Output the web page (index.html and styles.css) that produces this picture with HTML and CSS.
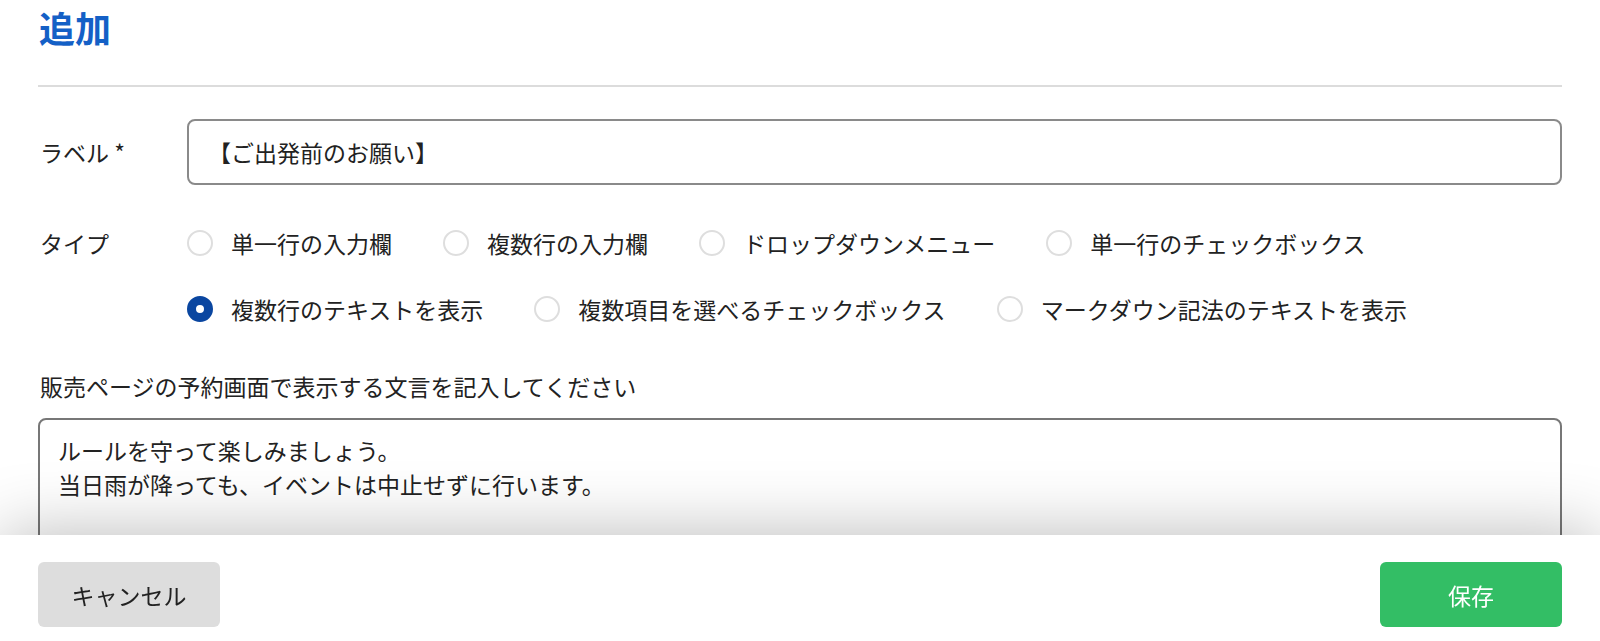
FILE: index.html
```html
<!DOCTYPE html>
<html lang="ja">
<head>
<meta charset="utf-8">
<title>追加</title>
<link rel="stylesheet" href="styles.css">
</head>
<body>
<div class="page">
  <header class="header">
    <h1 class="title">追加</h1>
  </header>

  <div class="field field-label">
    <div class="field-name">ラベル *</div>
    <div class="text-input">【ご出発前のお願い】</div>
  </div>

  <div class="field field-type">
    <div class="field-name">タイプ</div>
    <div class="radio-group">
      <label class="radio"><span class="dot"></span><span>単一行の入力欄</span></label>
      <label class="radio"><span class="dot"></span><span>複数行の入力欄</span></label>
      <label class="radio"><span class="dot"></span><span>ドロップダウンメニュー</span></label>
      <label class="radio"><span class="dot"></span><span>単一行のチェックボックス</span></label>
      <label class="radio"><span class="dot checked"></span><span>複数行のテキストを表示</span></label>
      <label class="radio"><span class="dot"></span><span>複数項目を選べるチェックボックス</span></label>
      <label class="radio"><span class="dot"></span><span>マークダウン記法のテキストを表示</span></label>
    </div>
  </div>

  <div class="desc">販売ページの予約画面で表示する文言を記入してください</div>
  <div class="textarea">ルールを守って楽しみましょう。<br>当日雨が降っても、イベントは中止せずに行います。</div>
</div>

<footer class="footer">
  <button class="btn btn-cancel">キャンセル</button>
  <button class="btn btn-save">保存</button>
</footer>
</body>
</html>
```

FILE: styles.css
```css
* { box-sizing: border-box; }

html, body {
  margin: 0;
  padding: 0;
  background: #fff;
}

body {
  font-family: "Noto Sans CJK JP", "Noto Sans", sans-serif;
  font-size: 23px;
  color: #222;
  overflow: hidden;
  height: 641px;
}

.page {
  padding: 0 38px;
}

.header {
  height: 87px;
  border-bottom: 2px solid #dcdcdc;
  padding-top: 7px;
}

.title {
  margin: 0;
  font-size: 36px;
  line-height: 40px;
  font-weight: 700;
  color: #1460c6;
  letter-spacing: 0;
  padding-left: 1px;
}

.field {
  display: flex;
}

.field-name {
  width: 149px;
  flex: none;
  padding-left: 2px;
}

.field-label {
  margin-top: 32px;
  align-items: center;
}

.text-input {
  flex: 1;
  height: 66px;
  border: 2px solid #8a8a8a;
  border-radius: 8px;
  padding: 0 19px;
  display: flex;
  align-items: center;
  line-height: 1;
}

.field-type {
  margin-top: 40px;
  align-items: flex-start;
}

.field-type .field-name {
  line-height: 36px;
}

.radio-group {
  flex: 1;
  display: flex;
  flex-wrap: wrap;
  column-gap: 51px;
  row-gap: 30px;
}

.radio {
  display: flex;
  align-items: center;
  gap: 18px;
  height: 36px;
  white-space: nowrap;
}

.dot {
  width: 26px;
  height: 26px;
  border-radius: 50%;
  border: 2px solid #dedede;
  background: #fff;
  flex: none;
}

.dot.checked {
  border: 9px solid #0a46a0;
}

.desc {
  margin-top: 42px;
  line-height: 34px;
  padding-left: 2px;
}

.textarea {
  margin-top: 15px;
  height: 220px;
  border: 2px solid #777;
  border-radius: 8px;
  padding: 13px 18px;
  line-height: 34px;
}

.footer {
  position: fixed;
  left: 0;
  right: 0;
  bottom: 0;
  height: 106px;
  background: #fff;
  display: flex;
  justify-content: space-between;
  align-items: flex-start;
  padding: 27px 38px 0;
  box-shadow: 0 0 70px rgba(0, 0, 0, 0.28);
}

.btn {
  width: 182px;
  height: 65px;
  border: none;
  border-radius: 6px;
  font-family: inherit;
  font-size: 23px;
  cursor: pointer;
}

.btn-cancel {
  background: #dddddd;
  color: #222;
}

.btn-save {
  background: #33be65;
  color: #fff;
}
```
